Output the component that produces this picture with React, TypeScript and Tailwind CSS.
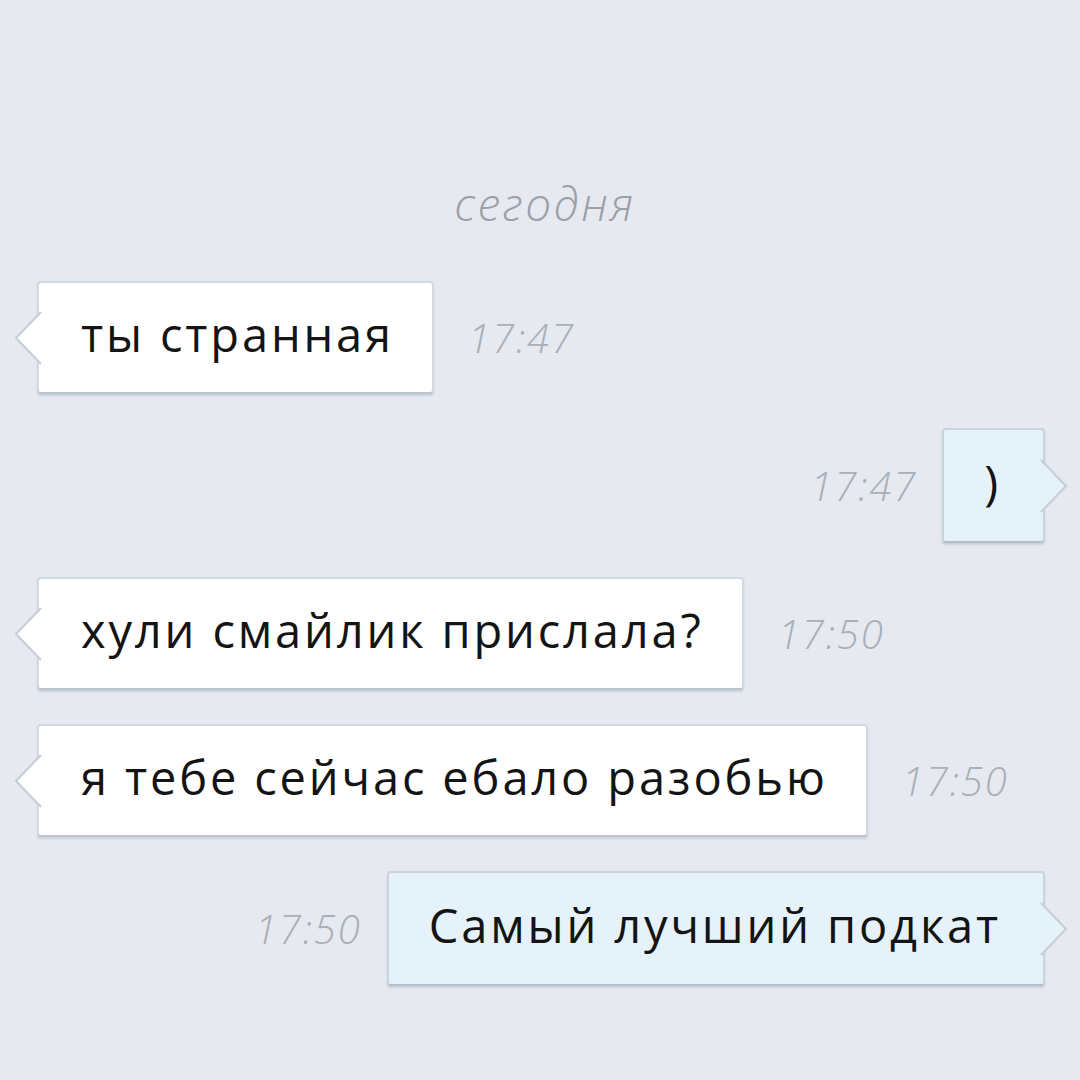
import React from "react";

const font = { fontFamily: '"Open Sans", "Noto Sans", sans-serif' };

function Tail({ side, fill }: { side: "left" | "right"; fill: string }) {
  if (side === "left") {
    return (
      <svg
        className="absolute top-1/2 -translate-y-1/2 left-[-25px]"
        width="28"
        height="54"
        viewBox="0 0 28 54"
      >
        <polygon points="28,1 2,27 28,53" fill={fill} />
        <polyline points="27,1 2,27 27,53" fill="none" stroke="#c6cdd6" strokeWidth="2" />
      </svg>
    );
  }
  return (
    <svg
      className="absolute top-1/2 -translate-y-1/2 right-[-25px]"
      width="28"
      height="54"
      viewBox="0 0 28 54"
    >
      <polygon points="0,1 26,27 0,53" fill={fill} />
      <polyline points="1,1 26,27 1,53" fill="none" stroke="#c6cdd6" strokeWidth="2" />
    </svg>
  );
}

function Time({ t }: { t: string }) {
  return (
    <span className="text-[40px] italic font-light text-[#a9afb7] tracking-[2px] leading-none" style={font}>
      {t}
    </span>
  );
}

function In({ text, time }: { text: string; time: string }) {
  return (
    <div className="flex items-center gap-[34px] pl-[37px]">
      <div className="relative bg-white border-2 border-[#d3d9e0] border-b-[#bcc4ce] rounded-[4px] h-[113px] flex items-center pl-[42px] pr-[38px] shadow-[0_2px_2px_rgba(150,160,175,0.35)]">
        <Tail side="left" fill="#ffffff" />
        <span className="text-[47px] text-[#141414] leading-none pb-[6px] tracking-[2.85px]" style={font}>
          {text}
        </span>
      </div>
      <Time t={time} />
    </div>
  );
}

function Out({ text, time }: { text: string; time: string }) {
  return (
    <div className="flex items-center justify-end gap-[25px] pr-[35px]">
      <Time t={time} />
      <div className="relative bg-[#e5f2fa] border-2 border-[#c9d3dc] border-b-[#b5bfca] rounded-[4px] h-[115px] flex items-center pl-[40px] pr-[42px] shadow-[0_2px_2px_rgba(150,160,175,0.35)]">
        <Tail side="right" fill="#e5f2fa" />
        <span className="text-[47px] text-[#141414] leading-none pb-[6px] tracking-[2.85px]" style={font}>
          {text}
        </span>
      </div>
    </div>
  );
}

export default function App() {
  return (
    <div className="w-[1080px] h-[1080px] bg-[#e6e9f0] overflow-hidden flex flex-col">
      <div className="pt-[180px] h-[281px] flex justify-center">
        <span className="text-[46px] italic font-light text-[#9aa0a8] leading-none tracking-[2.5px] pl-[10px]" style={font}>
          сегодня
        </span>
      </div>
      <div className="flex flex-col gap-[34px]">
        <In text="ты странная" time="17:47" />
        <Out text=")" time="17:47" />
        <In text="хули смайлик прислала?" time="17:50" />
        <In text="я тебе сейчас ебало разобью" time="17:50" />
        <Out text="Самый лучший подкат" time="17:50" />
      </div>
    </div>
  );
}
